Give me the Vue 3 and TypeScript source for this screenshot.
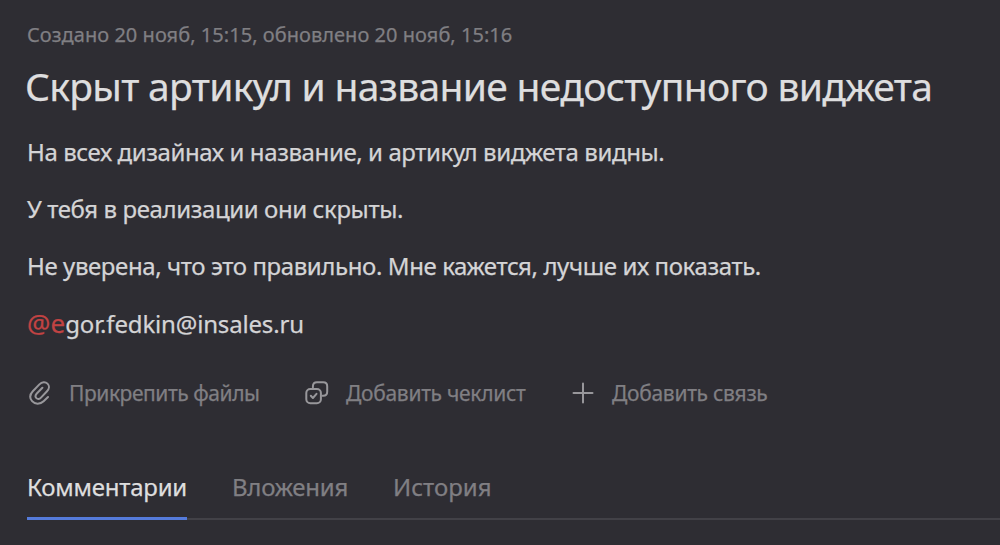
<template>
  <div class="issue">
    <div class="issue-meta">Создано 20 нояб, 15:15, обновлено 20 нояб, 15:16</div>
    <h1 class="issue-title">Скрыт артикул и название недоступного виджета</h1>

    <div class="issue-description">
      <p class="line-designs">На всех дизайнах и название, и артикул виджета видны.</p>
      <p class="line-hidden">У тебя в реализации они скрыты.</p>
      <p class="line-doubt">Не уверена, что это правильно. Мне кажется, лучше их показать.</p>
      <p class="line-mention"><span class="mention">@e</span>gor.fedkin@insales.ru</p>
    </div>

    <div class="issue-actions">
      <button class="action action-attach">
        <svg class="action-icon" viewBox="0 0 26 26">
          <path d="M21 17 L16.6 21.2 C13.2 24.5 7.8 24.4 5.1 21.2 C2.4 18 3 14.2 5.8 11.2 L12.4 4.4 C15 1.7 18.4 1.5 20.5 3.6 C22.6 5.7 22.4 8.8 20 11.3 L14 17.6 C12.5 19.2 10.6 19.3 9.4 18.1 C8.2 16.9 8.3 15.1 9.8 13.5 L15.4 7.8" />
        </svg>
        <span>Прикрепить файлы</span>
      </button>
      <button class="action action-checklist">
        <svg class="action-icon" viewBox="0 0 26 26">
          <path d="M8.9 7.5 V6.5 Q8.9 2.3 13 2.3 H19.2 Q23.2 2.3 23.2 6.3 V11.8 Q23.2 15.8 19.2 15.8 H18.4" />
          <rect x="2.3" y="9" width="14.6" height="14.2" rx="4" />
          <path d="M6.8 15.8 L8.9 18 L12.5 13.8" />
        </svg>
        <span>Добавить чеклист</span>
      </button>
      <button class="action action-link">
        <svg class="action-icon" viewBox="0 0 26 26">
          <path d="M13 3.5 V22.5 M3.5 13 H22.5" />
        </svg>
        <span>Добавить связь</span>
      </button>
    </div>

    <div class="tabs">
      <button
        v-for="tab in tabs"
        :key="tab.id"
        class="tab"
        :class="['tab-' + tab.id, { active: tab.id === activeTab }]"
        @click="activeTab = tab.id"
      >
        {{ tab.name }}
      </button>
    </div>
  </div>
</template>

<script setup lang="ts">
import { ref } from 'vue';

type Tab = {
  id: string;
  name: string;
};

const tabs: Tab[] = [
  { id: 'comments', name: 'Комментарии' },
  { id: 'attachments', name: 'Вложения' },
  { id: 'history', name: 'История' }
];

const activeTab = ref('comments');
</script>

<style>
body {
  margin: 0;
  background-color: #2e2d33;
}
</style>

<style scoped>
.issue {
  box-sizing: border-box;
  height: 545px;
  padding: 23px 0 0 27px;
  overflow: hidden;
  background-color: #2e2d33;
  color: #d4d4d6;
  font-family: 'Noto Sans', 'Open Sans', sans-serif;
  white-space: nowrap;
  -webkit-text-stroke: 0.25px currentColor;
}

.issue-meta {
  font-size: 20px;
  line-height: 24px;
  letter-spacing: 0.04px;
  color: #807f83;
}

.issue-title {
  margin: 15px 0 0 -2px;
  font-size: 39px;
  line-height: 48px;
  font-weight: 400;
  letter-spacing: -0.69px;
  color: #dededf;
}

.issue-description {
  display: flex;
  flex-direction: column;
  gap: 25px;
  margin-top: 26px;
  font-size: 24px;
  line-height: 32px;
  letter-spacing: -0.4px;
}

.issue-description p {
  height: 32px;
  margin: 0;
}

.issue-description .line-mention {
  letter-spacing: -0.17px;
}

.mention {
  color: #c14343;
  font-size: 26px;
  letter-spacing: 0.1px;
}

.issue-actions {
  display: flex;
  margin-top: 38px;
}

.action {
  display: flex;
  align-items: center;
  gap: 16px;
  padding: 0;
  border: none;
  background: none;
  color: #807f83;
  font-family: inherit;
  font-size: 21px;
  line-height: 32px;
  letter-spacing: -0.29px;
  cursor: pointer;
}

.action-attach {
  width: 277px;
  letter-spacing: -0.44px;
}

.action-checklist {
  width: 266px;
}

.action-icon {
  width: 26px;
  height: 26px;
  fill: none;
  stroke: #98979b;
  stroke-width: 2;
  stroke-linecap: round;
  stroke-linejoin: round;
}

.tabs {
  display: flex;
  gap: 45px;
  margin-top: 62px;
  box-shadow: inset 0 -2px #424147;
}

.tab {
  padding: 0 0 14px;
  border: none;
  border-bottom: 3px solid transparent;
  background: none;
  color: #807f83;
  font-family: inherit;
  font-size: 24px;
  line-height: 32px;
  letter-spacing: -0.23px;
  text-align: left;
  cursor: pointer;
}

.tab-history {
  letter-spacing: 0;
}

.tab.active {
  border-bottom-color: #557bdb;
  color: #dededf;
}
</style>
